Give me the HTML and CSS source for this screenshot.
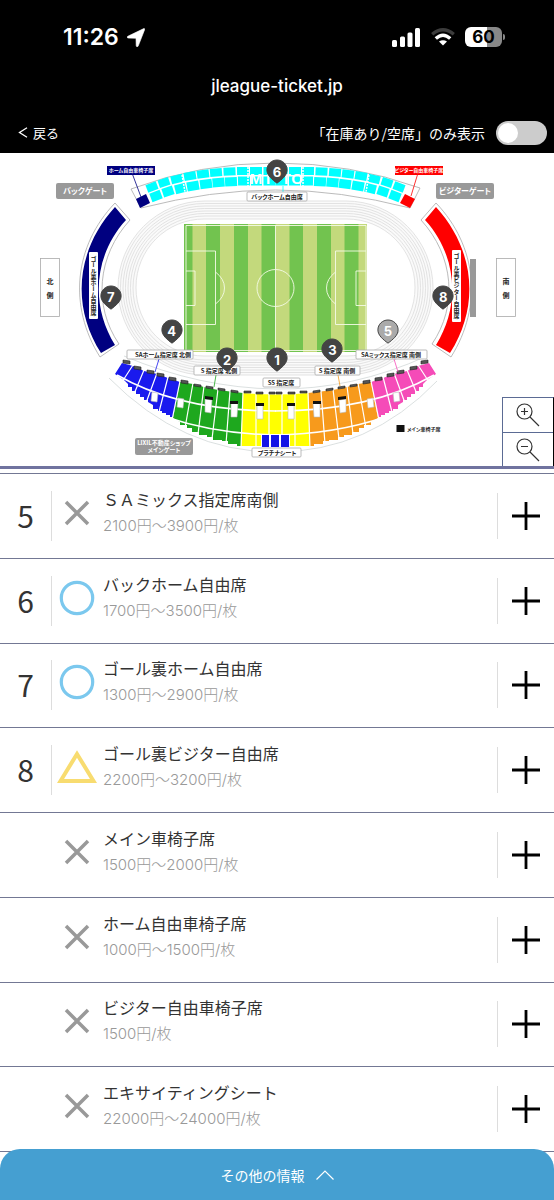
FILE: index.html
```html
<!DOCTYPE html>
<html lang="ja">
<head>
    <meta charset="utf-8" />
    <meta name="viewport" content="width=device-width, initial-scale=1">
    <title>jleague-ticket.jp</title>
    <link rel="stylesheet" href="styles.css">
</head>
<body>
    <svg class="defs" width="0" height="0" aria-hidden="true">
        <symbol id="pin" viewBox="0 0 22 25"><path d="M11 1C5.400 1 .9 5.400 .9 10.900 .9 16.500 6.200 20.500 11 24.200 15.800 20.500 21.100 16.500 21.100 10.900 21.100 5.400 16.600 1 11 1z"/></symbol>
        <symbol id="cross" viewBox="0 0 40 40"><path d="M9 9l22 22M31 9L9 31" stroke="#999" stroke-width="3.500" fill="none"/></symbol>
        <symbol id="circle" viewBox="0 0 40 40"><circle cx="20" cy="20" r="15.700" stroke="#7bc8ee" stroke-width="3.200" fill="none"/></symbol>
        <symbol id="triangle" viewBox="0 0 40 40"><path d="M20 7L36.500 34H3.500z" stroke="#f8dc70" stroke-width="4" fill="none"/></symbol>
        <symbol id="plus" viewBox="0 0 28 28"><path d="M14 0v28M0 14h28" stroke="#000" stroke-width="2.800"/></symbol>
    </svg>

    <header class="header">
        <div class="status">
            <div class="status-time">11:26
                <svg width="18" height="19" viewBox="0 0 18 19"><path d="M16.800 .6Q18 .4 17.600 1.700L11.300 17.800Q10.800 19 9.900 18.700 9.200 18.500 9.200 17.600L9 10.300 1.500 10.100Q.2 10 .2 9.200 .2 8.500 1.300 8z" fill="#fff" stroke="#fff" stroke-width=".6"/></svg>
            </div>
            <div class="status-icons">
                <svg width="29" height="19" viewBox="0 0 29 19" fill="#fff"><rect x="0" y="12" width="5" height="7" rx="1.500"/><rect x="8" y="8.500" width="5" height="10.500" rx="1.500"/><rect x="15.500" y="4.500" width="5" height="14.500" rx="1.500"/><rect x="23" y="0" width="5" height="19" rx="1.500"/></svg>
                <svg width="24" height="19" viewBox="0 0 24 19" fill="none" stroke-width="3.400"><path d="M1.200 6.300Q12-2.700 22.800 6.300" stroke="#3c3c3c"/><path d="M4.800 10.600Q12 4 19.200 10.600" stroke="#fff"/><path d="M8 13.600Q12 10.800 16 13.600L12 17.600z" fill="#fff"/></svg>
                <span class="battery">60</span>
            </div>
        </div>
        <p class="address">jleague-ticket.jp</p>
        <div class="toolbar">
            <a class="back" href="#">
                <svg width="10" height="11" viewBox="0 0 10 11"><path d="M9 .8L1.500 5.500 9 10.200" stroke="#fff" stroke-width="1.300" fill="none"/></svg>戻る
            </a>
            <label class="filter" for="stock">「在庫あり/空席」のみ表示
                <input class="switch" id="stock" type="checkbox">
            </label>
        </div>
    </header>

    <section class="map">
        <svg class="stadium" viewBox="0 153 554 313">
            <defs>
                <g id="goal-stand">
                    <path d="M115 203L130 220C97 256 93 306 119 344L100 357C68 306 74 246 115 203z" fill="#fff" stroke="#aaa" stroke-width=".8"/>
                    <path d="M115 207L126 220C94 255 90 305 115 345L101 353C71 306 76 250 115 207z" fill="currentColor"/>
                </g>
                <g id="back-half" fill="#0ff">
                    <rect x="-5.500" y="-4" width="11" height="8" transform="translate(152 187) rotate(-21)"/>
                    <rect x="-5.500" y="-4" width="11" height="8" transform="translate(164 182.500) rotate(-18)"/>
                    <rect x="-6" y="-4" width="12" height="8" transform="translate(177 179) rotate(-14)"/>
                    <rect x="-6" y="-4" width="12" height="8" transform="translate(190 176) rotate(-10)"/>
                    <rect x="-6" y="-4" width="12" height="8" transform="translate(203 174) rotate(-7)"/>
                    <rect x="-6" y="-4" width="12" height="8" transform="translate(216 172.500) rotate(-5)"/>
                    <rect x="-6" y="-4" width="12" height="8" transform="translate(229.500 171.500) rotate(-3)"/>
                    <rect x="-6" y="-4" width="12" height="8" transform="translate(243 171) rotate(-1)"/>
                    <rect x="250" y="167" width="12" height="8"/>
                    <rect x="263.500" y="167" width="12" height="8"/>
                    <rect x="-5.500" y="-4.500" width="11" height="9" transform="translate(156 196) rotate(-21)"/>
                    <rect x="-5.500" y="-4.500" width="11" height="9" transform="translate(168 191.500) rotate(-18)"/>
                    <rect x="-5.500" y="-4.500" width="11" height="9" transform="translate(180.500 188.500) rotate(-14)"/>
                    <rect x="-6" y="-4.500" width="12" height="9" transform="translate(193 186) rotate(-10)"/>
                    <rect x="-6" y="-4.500" width="12" height="9" transform="translate(206 184) rotate(-7)"/>
                    <rect x="-6" y="-4.500" width="12" height="9" transform="translate(218.500 182.500) rotate(-5)"/>
                    <rect x="-6" y="-4.500" width="12" height="9" transform="translate(231 181.700) rotate(-3)"/>
                    <rect x="-6" y="-4.500" width="12" height="9" transform="translate(244 181) rotate(-1)"/>
                    <rect x="251" y="176.500" width="11" height="9"/>
                    <rect x="263.500" y="176.500" width="12" height="9"/>
                    <path d="M182 175l3 17M248 167v19" stroke="#fff" stroke-width="1.500" stroke-dasharray="2 1"/>
                </g>
                <path id="wing-outer" d="M122 363L133 366 144 371 157 374 168 378 180 382 173 417H170V415H166V413H162V411H158V409H153V405L148 402V400H144V397H140V394H136V391H132V387H128V384L124 380 115 374z"/>
                <path id="wing-inner" d="M180 382L193 384 204 387 218 390 230 391.500 243 393 241 446H237V444H228V441H222V440H213V437H207V435H199V432H192V428H187V425H180V422L173 418z"/>
                <!-- aisles, entrances and gate marks of one half of the main stand -->
                <g id="wing-aisles">
                    <path d="M133 365L122 382M144 370L134 394M157 373L146 403M168 377L159 412M180 381L172 420M193 383L185 428M204 386L198 434M218 389L212 439M230 391L226 444M243 392L241 448M256 393V448M269 394V435" stroke="#fff" stroke-width="1.200" fill="none"/>
                    <path d="M117 375Q180 411 276 411M166 417Q216 434 276 435" stroke="#fff" stroke-width="1.600" fill="none"/>
                    <path d="M152 392l6 1-1 9-6-1zM178 398l6 1-1 9-6-1zM205 399l7 1-1 13-6-1zM231 403h7l-1 14h-6zM257 405h6v14h-6z" fill="#fff" stroke="#bbb" stroke-width=".6"/>
                    <path d="M205 396l8 1v3l-8-1zM230 401h8v3h-8zM256 403h8v3h-8z" fill="#111"/>
                    <path d="M123 360l7 1v3l-7-1zM134 366l7 1v3l-7-1zM147 370l7 1v3l-7-1zM157 373l7 1v3l-7-1zM169 377l7 1v3l-7-1zM181 380l7 1v3l-7-1zM194 384l7 1v2l-7-1zM206 386l7 1v2l-7-1zM218 388l7 1v2l-7-1zM231 390l7 1v2l-7-1zM244 391h7v2h-7zM256 392h7v2h-7zM269 392h6v2h-6z" fill="#555" stroke="#222" stroke-width=".6"/>
                </g>
            </defs>

            <!-- running track -->
            <g fill="none" stroke="#dcdcdc" stroke-width=".8">
                <rect x="118" y="201" width="315" height="174" rx="87" fill="#fafafa"/>
                <rect x="120.500" y="203.500" width="310" height="169" rx="84"/>
                <rect x="123" y="206" width="305" height="164" rx="82"/>
                <rect x="125.500" y="208.500" width="300" height="159" rx="79"/>
                <rect x="128" y="211" width="295" height="154" rx="77"/>
                <rect x="130.500" y="213.500" width="290" height="149" rx="74"/>
                <rect x="133" y="216" width="285" height="144" rx="72"/>
                <rect x="136" y="219" width="279" height="137" rx="68" fill="#fff"/>
            </g>

            <!-- pitch -->
            <rect x="184" y="224" width="183" height="128" fill="#72c34f"/>
            <path d="M192.500 224H206v128h-13.500zM220 224h14v128h-14zM248 224h13.500v128H248zM275.500 224h14v128h-14zM303 224h14v128h-14zM331 224h13.500v128H331zM358.500 224h8.500v128h-8.500z" fill="#c3d97c"/>
            <g fill="none" stroke="#f4fbe6" stroke-width=".9">
                <path d="M186 225.500H366V350.500H186zM275.500 225V351M186 251h29.500v73.500H186M186 271h9v34.500h-9M366 251h-30.500v73.500H366M366 271h-10v34.500h10M215.500 272q9 7 9 16t-9 16M335.500 272q-9 7-9 16t9 16"/>
                <circle cx="275.500" cy="288" r="18.500"/>
            </g>

            <!-- back stand -->
            <path d="M131 189Q200 163 275.500 163T420 188L410 208Q340 190 275.500 190T141 208z" fill="#fff" stroke="#aaa" stroke-width=".8"/>
            <use href="#back-half"/>
            <use href="#back-half" transform="translate(551) scale(-1 1)"/>
            <g class="letters">
                <text x="256" y="184">M</text><text x="268" y="184">I</text><text x="286" y="184">T</text><text x="297" y="184">O</text>
            </g>
            <path d="M136 199l10-5 4 9-10 5z" fill="#000080"/>
            <path d="M405 194l10 5-5 9-10-5z" fill="#f00"/>
            <path d="M132 173l9 24" stroke="#000080" stroke-width=".8"/>
            <path d="M418 173l-7 23" stroke="#f00" stroke-width=".8"/>

            <!-- goal stands -->
            <use href="#goal-stand" color="#000080"/>
            <use href="#goal-stand" color="#f00" transform="translate(551) scale(-1 1)"/>
            <rect x="470" y="259" width="6" height="58" fill="#999"/>

            <!-- main stand -->
            <path d="M109 378Q182 452 275.500 452T437 381M124 356Q200 388 276 389T427 356" fill="none" stroke="#ccd2d2" stroke-width=".7"/>
            <use href="#wing-outer" fill="#1a1aee"/>
            <use href="#wing-inner" fill="#1ea81e"/>
            <use href="#wing-outer" fill="#f54bb8" transform="translate(551) scale(-1 1)"/>
            <use href="#wing-inner" fill="#f79a1c" transform="translate(551) scale(-1 1)"/>
            <path d="M243 393Q275 396 308 393L310 446H241z" fill="#ff0"/>
            <use href="#wing-aisles"/>
            <use href="#wing-aisles" transform="translate(551) scale(-1 1)"/>
            <path d="M261 434h29v13h-29z" fill="#fff"/>
            <path d="M262 435h7v12h-7zM271 435h8v12h-8zM281 435h8v12h-8z" fill="#1414e6"/>
            <path d="M159 359l-4 13" stroke="#1a1aee" stroke-width=".8"/>
            <path d="M216 375l-2 12" stroke="#1ea81e" stroke-width=".8"/>
            <path d="M338 375l2 11" stroke="#f79a1c" stroke-width=".8"/>
            <path d="M394 359l4 13" stroke="#f54bb8" stroke-width=".8"/>
            <path d="M283 186v6" stroke="#0ff" stroke-width=".8"/>

            <!-- labels -->
            <g fill="#fff" stroke="#aaa" stroke-width=".8">
                <rect x="247" y="192" width="60" height="9" rx="1"/>
                <rect x="127" y="350" width="66" height="9" rx="1"/>
                <rect x="194" y="366" width="46" height="9" rx="1"/>
                <rect x="263" y="378" width="37" height="9" rx="1"/>
                <rect x="315" y="366" width="45" height="9" rx="1"/>
                <rect x="356" y="350" width="71" height="9" rx="1"/>
                <rect x="252" y="448" width="49" height="9" rx="1"/>
                <rect x="40.500" y="258.500" width="19" height="58"/>
                <rect x="496.500" y="258.500" width="19" height="58"/>
            </g>
            <g class="label">
                <text x="277" y="199">バックホーム自由席</text>
                <text x="163" y="357">SAホーム指定席 北側</text>
                <text x="219" y="373">S 指定席 北側</text>
                <text x="281" y="385">SS 指定席</text>
                <text x="337" y="373">S 指定席 南側</text>
                <text x="391" y="357">SAミックス指定席 南側</text>
                <text x="277" y="455">プラチナシート</text>
            </g>
            <g class="label label-side">
                <text x="50" y="284">北</text><text x="50" y="298">側</text>
                <text x="506" y="284">南</text><text x="506" y="298">側</text>
            </g>
            <rect x="89" y="252" width="9" height="67" rx="1" fill="#fff"/>
            <rect x="452" y="250" width="9" height="72" rx="1" fill="#fff"/>
            <g class="label label-vertical">
                <text x="93.500" y="285.500">ゴール裏ホーム自由席</text>
                <text x="456.500" y="286">ゴール裏ビジター自由席</text>
            </g>
            <rect x="107" y="166" width="48" height="9" fill="#000080"/>
            <rect x="395" y="166" width="48" height="9" fill="#f00"/>
            <g class="label label-small">
                <text x="131" y="172">ホーム自由車椅子席</text>
                <text x="419" y="172">ビジター自由車椅子席</text>
            </g>
            <g fill="#999">
                <rect x="56" y="183" width="58" height="16" rx="2"/>
                <rect x="436" y="183" width="58" height="16" rx="2"/>
                <rect x="135" y="438" width="58" height="17" rx="2"/>
            </g>
            <g class="label label-gate">
                <text x="85" y="194">バックゲート</text>
                <text x="465" y="194">ビジターゲート</text>
            </g>
            <g class="label label-main">
                <text x="164" y="445">LIXIL不動産ショップ</text>
                <text x="164" y="452">メインゲート</text>
            </g>
            <rect x="396.500" y="425" width="8" height="7" fill="#111"/>
            <text class="label label-legend" x="407" y="431">メイン車椅子席</text>
        </svg>

        <button class="pin pin-1" type="button"><svg><use href="#pin"/></svg><span>1</span></button>
        <button class="pin pin-2" type="button"><svg><use href="#pin"/></svg><span>2</span></button>
        <button class="pin pin-3" type="button"><svg><use href="#pin"/></svg><span>3</span></button>
        <button class="pin pin-4" type="button"><svg><use href="#pin"/></svg><span>4</span></button>
        <button class="pin pin-5 pin-soldout" type="button"><svg><use href="#pin"/></svg><span>5</span></button>
        <button class="pin pin-6" type="button"><svg><use href="#pin"/></svg><span>6</span></button>
        <button class="pin pin-7" type="button"><svg><use href="#pin"/></svg><span>7</span></button>
        <button class="pin pin-8" type="button"><svg><use href="#pin"/></svg><span>8</span></button>

        <div class="zoom">
            <button type="button" aria-label="拡大"><svg width="24" height="24" viewBox="0 0 24 24"><circle cx="8.500" cy="8.500" r="7.500"/><path d="M14 14l9 9M5 8.500h7M8.500 5v7"/></svg></button>
            <button type="button" aria-label="縮小"><svg width="24" height="24" viewBox="0 0 24 24"><circle cx="8.500" cy="8.500" r="7.500"/><path d="M14 14l9 9M5 8.500h7"/></svg></button>
        </div>
    </section>

    <ul class="seats">
        <li class="seat">
            <span class="seat-no">5</span>
            <svg class="mark"><use href="#cross"/></svg>
            <div class="seat-text"><p class="name">ＳＡミックス指定席南側</p><p class="price">2100円〜3900円/枚</p></div>
            <button class="open" type="button" aria-label="開く"><svg><use href="#plus"/></svg></button>
        </li>
        <li class="seat">
            <span class="seat-no">6</span>
            <svg class="mark"><use href="#circle"/></svg>
            <div class="seat-text"><p class="name">バックホーム自由席</p><p class="price">1700円〜3500円/枚</p></div>
            <button class="open" type="button" aria-label="開く"><svg><use href="#plus"/></svg></button>
        </li>
        <li class="seat">
            <span class="seat-no">7</span>
            <svg class="mark"><use href="#circle"/></svg>
            <div class="seat-text"><p class="name">ゴール裏ホーム自由席</p><p class="price">1300円〜2900円/枚</p></div>
            <button class="open" type="button" aria-label="開く"><svg><use href="#plus"/></svg></button>
        </li>
        <li class="seat">
            <span class="seat-no">8</span>
            <svg class="mark"><use href="#triangle"/></svg>
            <div class="seat-text"><p class="name">ゴール裏ビジター自由席</p><p class="price">2200円〜3200円/枚</p></div>
            <button class="open" type="button" aria-label="開く"><svg><use href="#plus"/></svg></button>
        </li>
        <li class="seat">
            <span class="seat-no seat-none"></span>
            <svg class="mark"><use href="#cross"/></svg>
            <div class="seat-text"><p class="name">メイン車椅子席</p><p class="price">1500円〜2000円/枚</p></div>
            <button class="open" type="button" aria-label="開く"><svg><use href="#plus"/></svg></button>
        </li>
        <li class="seat">
            <span class="seat-no seat-none"></span>
            <svg class="mark"><use href="#cross"/></svg>
            <div class="seat-text"><p class="name">ホーム自由車椅子席</p><p class="price">1000円〜1500円/枚</p></div>
            <button class="open" type="button" aria-label="開く"><svg><use href="#plus"/></svg></button>
        </li>
        <li class="seat">
            <span class="seat-no seat-none"></span>
            <svg class="mark"><use href="#cross"/></svg>
            <div class="seat-text"><p class="name">ビジター自由車椅子席</p><p class="price">1500円/枚</p></div>
            <button class="open" type="button" aria-label="開く"><svg><use href="#plus"/></svg></button>
        </li>
        <li class="seat">
            <span class="seat-no seat-none"></span>
            <svg class="mark"><use href="#cross"/></svg>
            <div class="seat-text"><p class="name">エキサイティングシート</p><p class="price">22000円〜24000円/枚</p></div>
            <button class="open" type="button" aria-label="開く"><svg><use href="#plus"/></svg></button>
        </li>
    </ul>

    <button class="more" type="button">その他の情報
        <svg width="18" height="10" viewBox="0 0 18 10"><path d="M.5 9.500L9 1l8.500 8.500" stroke="#fff" stroke-width="1.200" fill="none"/></svg>
    </button>
</body>
</html>
```
FILE: styles.css
```css
* {
    box-sizing: border-box;
}

body {
    margin: 0;
    min-height: 100vh;
    display: flex;
    flex-direction: column;
    background: #fff;
    color: #333;
    font-family: "Noto Sans CJK JP", sans-serif;
}

p {
    margin: 0;
}

button {
    padding: 0;
    border: 0;
    background: none;
    font-family: inherit;
    cursor: pointer;
}

.defs {
    position: absolute;
}

/* header */
.header {
    background: #000;
    color: #fff;
}

.status {
    display: flex;
    justify-content: space-between;
    align-items: center;
    height: 74px;
    padding: 0 49px 0 63px;
}

.status-time {
    display: flex;
    align-items: center;
    gap: 8px;
    font: 600 23px "Inter", sans-serif;
}

.status-icons {
    display: flex;
    align-items: center;
    gap: 10px;
}

.battery {
    position: relative;
    width: 37px;
    height: 20px;
    margin-right: 3px;
    border-radius: 6px;
    background: linear-gradient(90deg, #fff 60%, #888 60%);
    color: #000;
    font: 700 17px/20px "Inter", sans-serif;
    text-align: center;
}

.battery::after {
    content: "";
    position: absolute;
    top: 7px;
    right: -3px;
    width: 2px;
    height: 6px;
    border-radius: 0 2px 2px 0;
    background: #888;
}

.address {
    font: 500 17px/24px "Inter", sans-serif;
    text-align: center;
}

.toolbar {
    display: flex;
    justify-content: space-between;
    align-items: center;
    height: 55px;
    padding: 14px 7px 0 18px;
    font-size: 14px;
    line-height: 24px;
}

.back {
    display: flex;
    align-items: center;
    gap: 5px;
    color: #fff;
    font-size: 13px;
    text-decoration: none;
}

.filter {
    display: flex;
    align-items: center;
    gap: 11px;
}

.switch {
    appearance: none;
    width: 51px;
    height: 24px;
    margin: 0;
    padding: 2px;
    border-radius: 12px;
    background: #ccc;
}

.switch::before {
    content: "";
    display: block;
    width: 20px;
    height: 20px;
    border-radius: 50%;
    background: #fff;
}

.switch:checked {
    background: #459fd1;
}

.switch:checked::before {
    margin-left: auto;
}

/* stadium map */
.map {
    position: relative;
    border-bottom: 3px solid #70739f;
}

.stadium {
    display: block;
    width: 100%;
}

.label {
    font-size: 6px;
    font-weight: 700;
    font-feature-settings: "palt";
    text-anchor: middle;
    fill: #222;
}

.label-side {
    font-size: 7px;
}

.label-vertical {
    writing-mode: vertical-rl;
    font-feature-settings: normal;
}

.label-small {
    font-size: 5px;
    fill: #fff;
}

.label-gate {
    font-size: 8px;
    fill: #fff;
}

.label-main {
    fill: #fff;
}

.label-legend {
    font-size: 5px;
    text-anchor: start;
}

.letters {
    font: 700 15px "Liberation Sans", sans-serif;
    text-anchor: middle;
    fill: #fff;
}

.pin {
    position: absolute;
    width: 22px;
    height: 25px;
    transform: translate(-50%, -100%);
    color: #fff;
    font: 700 13px/24px "Inter", sans-serif;
}

.pin svg {
    position: absolute;
    left: 0;
    top: 0;
    width: 22px;
    height: 25px;
    fill: #444;
    stroke: #444;
}

.pin span {
    position: relative;
}

.pin-soldout svg {
    fill: #aaa;
}

.pin-1 { left: 50%; top: 70%; }
.pin-2 { left: 41%; top: 70%; }
.pin-3 { left: 60%; top: 67%; }
.pin-4 { left: 31%; top: 61%; }
.pin-5 { left: 70%; top: 61%; }
.pin-6 { left: 50%; top: 10%; }
.pin-7 { left: 20%; top: 50%; }
.pin-8 { left: 80%; top: 50%; }

.zoom {
    position: absolute;
    right: 0;
    bottom: 0;
    border: 1px solid #5b6b94;
    border-right: 1px solid #000;
    border-bottom: 0;
    background: #fff;
}

.zoom button {
    display: flex;
    align-items: center;
    justify-content: center;
    width: 50px;
    height: 34px;
}

.zoom button + button {
    border-top: 1px solid #5b6b94;
}

.zoom svg {
    fill: none;
    stroke: #333;
    stroke-width: 1.2;
}

/* seat list */
.seats {
    flex: 1;
    display: grid;
    grid-auto-rows: 1fr;
    margin: 4px 0 0;
    padding: 0;
    border-top: 1px solid #737894;
    list-style: none;
}

.seat {
    display: flex;
    align-items: center;
    min-height: 80px;
    border-bottom: 1px solid #737894;
}

.seat-no {
    width: 52px;
    height: 50px;
    border-right: 1px solid #ddd;
    font-size: 30px;
    line-height: 48px;
    text-align: center;
}

.seat-none {
    border-color: transparent;
}

.mark {
    width: 40px;
    height: 40px;
    margin: 0 6px 6px 5px;
}

.seat-text {
    flex: 1;
    padding-bottom: 6px;
}

.name {
    font-size: 16px;
    line-height: 26px;
}

.price {
    color: #999;
    font-family: "Inter", "Noto Sans CJK JP", sans-serif;
    font-size: 15px;
    font-weight: 300;
    line-height: 28px;
}

.open {
    width: 57px;
    height: 46px;
    border-left: 1px solid #ddd;
}

.open svg {
    display: block;
    width: 28px;
    height: 28px;
    margin: 0 auto;
}

.more {
    position: sticky;
    bottom: 0;
    display: flex;
    align-items: center;
    justify-content: center;
    gap: 11px;
    height: 51px;
    margin-top: -3px;
    border-radius: 20px 20px 0 0;
    background: #459fd1;
    color: #fff;
    font-size: 14px;
}
```
